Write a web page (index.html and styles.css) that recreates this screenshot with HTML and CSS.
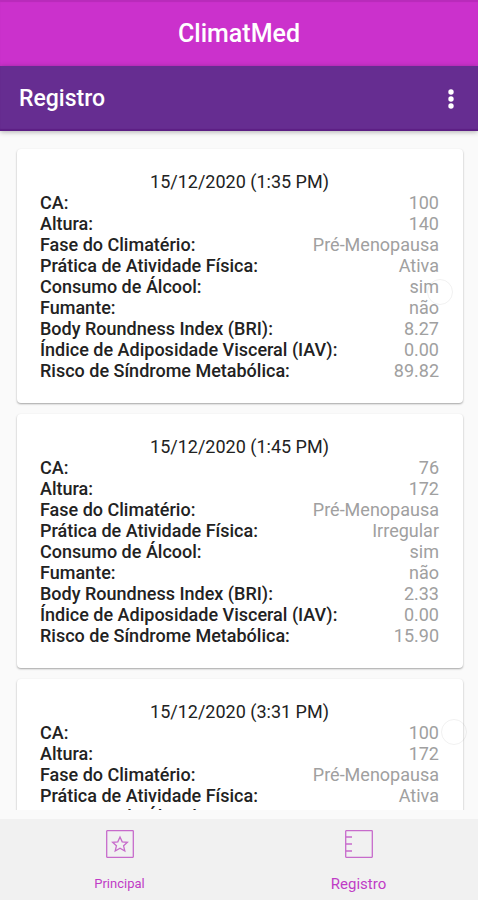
FILE: index.html
```html
<!DOCTYPE html>
<html lang="pt-BR">
<head>
    <meta charset="UTF-8">
    <meta name="viewport" content="width=device-width, initial-scale=1.0">
    <title>ClimatMed</title>
    <link rel="stylesheet" href="styles.css">
</head>
<body>

    <header class="app-bar">
        <h1>ClimatMed</h1>
    </header>

    <div class="toolbar">
        <h2>Registro</h2>
        <button class="menu-btn" aria-label="Mais opções">
            <svg width="8" height="20" viewBox="0 0 8 20">
                <circle cx="4" cy="3" r="2.7"/>
                <circle cx="4" cy="10" r="2.7"/>
                <circle cx="4" cy="17" r="2.7"/>
            </svg>
        </button>
    </div>

    <main class="list">
        <section class="card">
            <h3>15/12/2020 (1:35 PM)</h3>
            <dl>
                <div><dt>CA:</dt><dd>100</dd></div>
                <div><dt>Altura:</dt><dd>140</dd></div>
                <div><dt>Fase do Climatério:</dt><dd>Pré-Menopausa</dd></div>
                <div><dt>Prática de Atividade Física:</dt><dd>Ativa</dd></div>
                <div><dt>Consumo de Álcool:</dt><dd>sim</dd></div>
                <div><dt>Fumante:</dt><dd>não</dd></div>
                <div><dt>Body Roundness Index (BRI):</dt><dd>8.27</dd></div>
                <div><dt>Índice de Adiposidade Visceral (IAV):</dt><dd>0.00</dd></div>
                <div><dt>Risco de Síndrome Metabólica:</dt><dd>89.82</dd></div>
            </dl>
            <span class="touch touch-low"></span>
        </section>

        <section class="card">
            <h3>15/12/2020 (1:45 PM)</h3>
            <dl>
                <div><dt>CA:</dt><dd>76</dd></div>
                <div><dt>Altura:</dt><dd>172</dd></div>
                <div><dt>Fase do Climatério:</dt><dd>Pré-Menopausa</dd></div>
                <div><dt>Prática de Atividade Física:</dt><dd>Irregular</dd></div>
                <div><dt>Consumo de Álcool:</dt><dd>sim</dd></div>
                <div><dt>Fumante:</dt><dd>não</dd></div>
                <div><dt>Body Roundness Index (BRI):</dt><dd>2.33</dd></div>
                <div><dt>Índice de Adiposidade Visceral (IAV):</dt><dd>0.00</dd></div>
                <div><dt>Risco de Síndrome Metabólica:</dt><dd>15.90</dd></div>
            </dl>
        </section>

        <section class="card">
            <h3>15/12/2020 (3:31 PM)</h3>
            <dl>
                <div><dt>CA:</dt><dd>100</dd></div>
                <div><dt>Altura:</dt><dd>172</dd></div>
                <div><dt>Fase do Climatério:</dt><dd>Pré-Menopausa</dd></div>
                <div><dt>Prática de Atividade Física:</dt><dd>Ativa</dd></div>
                <div><dt>Consumo de Álcool:</dt><dd></dd></div>
            </dl>
            <span class="touch touch-edge"></span>
        </section>
    </main>

    <nav class="tabs">
        <a href="#principal">
            <svg width="28" height="28" viewBox="0 0 28 28">
                <rect x="0.7" y="0.7" width="26.6" height="26.6" rx="0.5"/>
                <path d="M14 7 L16.2 11.8 L21.4 12.3 L17.6 15.8 L18.8 21 L14 18.3 L9.2 21 L10.4 15.8 L6.6 12.3 L11.8 11.8 Z"/>
            </svg>
            <span>Principal</span>
        </a>
        <a href="#registro" class="active">
            <svg width="28" height="28" viewBox="0 0 28 28">
                <rect x="0.7" y="0.7" width="26.6" height="26.6" rx="0.5"/>
                <path d="M1 7 H7 M1 14 H7 M1 21 H7"/>
            </svg>
            <span>Registro</span>
        </a>
    </nav>

</body>
</html>
```
FILE: styles.css
```css
* {
    box-sizing: border-box;
}
body {
    margin: 0;
    height: 100vh;
    display: flex;
    flex-direction: column;
    font-family: Roboto, sans-serif;
    background-color: #fafafa;
    color: #222;
}
h1, h2, h3, dl, dd {
    margin: 0;
}
h1, h2 {
    font-weight: 500;
    color: white;
}
.app-bar {
    flex: none;
    height: 66px;
    display: flex;
    align-items: center;
    justify-content: center;
    background-color: #cb31cc;
    box-shadow: inset 0 2px 1px #b82bba;
}
.app-bar h1 {
    font-size: 25px;
}
.toolbar {
    flex: none;
    height: 65px;
    padding: 0 19px;
    display: flex;
    align-items: center;
    justify-content: space-between;
    background-color: #662d91;
    box-shadow: inset 0 -2px 1px #5c1f84, 0 1px 5px rgba(0, 0, 0, 0.3);
    z-index: 1;
}
.toolbar h2 {
    font-size: 23px;
}
.menu-btn {
    padding: 0 4px;
    border: none;
    background: none;
    cursor: pointer;
}
.menu-btn svg {
    display: block;
    fill: white;
}
.list {
    flex: 1;
    min-height: 0;
    margin-bottom: 9px;
    padding: 18px 15px 0 17px;
    overflow-y: auto;
    scrollbar-width: none;
}
.card {
    position: relative;
    margin-bottom: 11px;
    padding: 22px 24px 22px 23px;
    background: white;
    border-radius: 4px;
    box-shadow: 0 1px 2px rgba(0, 0, 0, 0.35);
    font-size: 18px;
    line-height: 21px;
}
.card h3 {
    font-size: 18px;
    font-weight: 400;
    text-align: center;
}
.card dl div {
    display: flex;
    justify-content: space-between;
}
.card dt {
    font-weight: 500;
}
.card dd {
    color: #a0a0a0;
}
/* Faint touch marks */
.touch {
    position: absolute;
    width: 26px;
    height: 26px;
    border: 1px solid rgba(0, 0, 0, 0.06);
    border-radius: 50%;
}
.touch-low {
    top: 130px;
    right: 10px;
}
.touch-edge {
    top: 40px;
    right: -4px;
}
.tabs {
    flex: none;
    height: 81px;
    display: flex;
    background-color: #f1f1f1;
}
.tabs a {
    flex: 1;
    padding: 11px 0 8px;
    display: flex;
    flex-direction: column;
    align-items: center;
    justify-content: space-between;
    font-size: 13px;
    line-height: 16px;
    color: #c03cc6;
    text-decoration: none;
}
.tabs .active {
    font-size: 15px;
}
.tabs svg {
    fill: none;
    stroke: #c76bcb;
    stroke-width: 1.3;
}
```
